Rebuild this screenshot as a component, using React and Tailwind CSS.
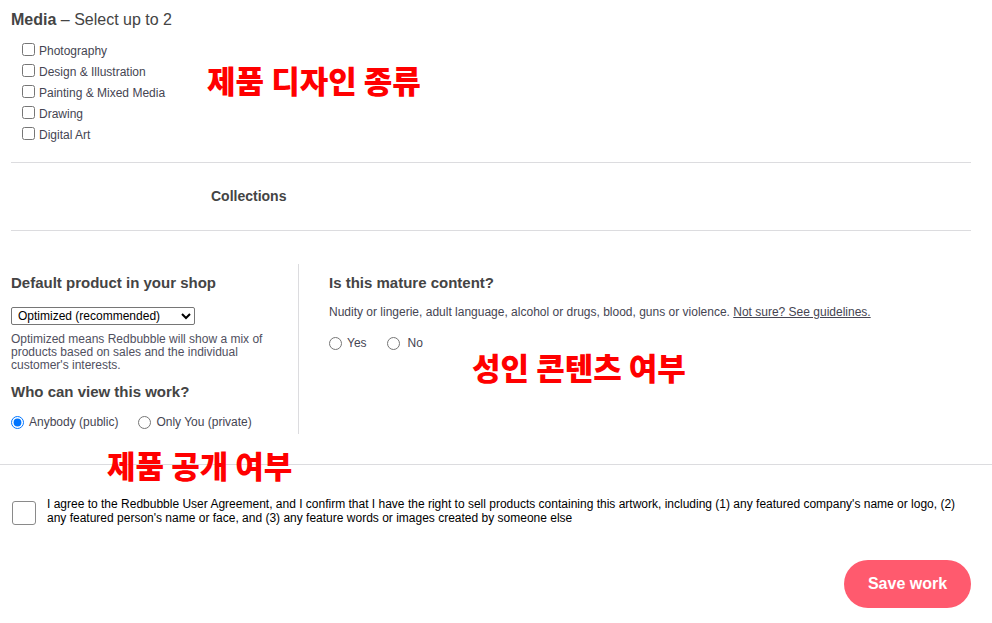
import React from "react";

const ko = { fontFamily: '"Noto Sans CJK KR", sans-serif' };

function Check({ label }) {
  return (
    <label className="flex items-center h-[21px]">
      <input type="checkbox" className="m-0 w-[13px] h-[13px] mt-[-3px] mr-[4px]" />
      <span>{label}</span>
    </label>
  );
}

export default function App() {
  return (
    <div className="relative w-[992px] h-[623px] bg-white text-[#3e3e48] overflow-hidden" style={{ fontFamily: '"Liberation Sans", Arial, sans-serif' }}>
      <div className="px-[11px] pt-[11px]">
        <div className="text-[16px] leading-[18px] text-[#444]">
          <span className="font-bold">Media</span> – Select up to 2
        </div>
        <div className="pl-[11px] pt-[11px] text-[12px] text-[#454552] flex flex-col">
          <Check label="Photography" />
          <Check label="Design & Illustration" />
          <Check label="Painting & Mixed Media" />
          <Check label="Drawing" />
          <Check label="Digital Art" />
        </div>
        <div className="w-[960px] border-t border-[#dcdcdf] mt-[17px]" />
        <div className="h-[67px] flex items-center pl-[200px] text-[14px] font-bold text-[#444]">Collections</div>
        <div className="w-[960px] border-t border-[#dcdcdf]" />
      </div>

      <div className="flex pl-[11px] pt-[33px]">
        <div className="w-[288px] border-r border-[#dcdcdf] h-[170px]">
          <div className="text-[15px] font-bold text-[#444] leading-[18px] mt-[10px]">Default product in your shop</div>
          <select className="mt-[15px] w-[184px] h-[18px] text-[12px] text-black border border-[#767676] rounded-[2px] px-[2px] leading-[14px] bg-white" defaultValue="opt">
            <option value="opt">Optimized (recommended)</option>
          </select>
          <div className="mt-[6px] text-[12px] leading-[13px] text-[#505060] w-[260px]">
            Optimized means Redbubble will show a mix of products based on sales and the individual customer's interests.
          </div>
          <div className="mt-[11px] text-[15px] font-bold text-[#444] leading-[18px]">Who can view this work?</div>
          <div className="mt-[12px] flex items-center text-[12px] text-[#454552]">
            <label className="flex items-center">
              <input type="radio" name="vis" defaultChecked className="m-0 w-[13px] h-[13px] mr-[5px]" />
              Anybody (public)
            </label>
            <label className="flex items-center ml-[20px]">
              <input type="radio" name="vis" className="m-0 w-[13px] h-[13px] mr-[5px]" />
              Only You (private)
            </label>
          </div>
        </div>
        <div className="pl-[30px]">
          <div className="text-[15px] font-bold text-[#444] leading-[18px] mt-[10px]">Is this mature content?</div>
          <div className="mt-[13px] text-[12px] text-[#454552] leading-[14px]">
            Nudity or lingerie, adult language, alcohol or drugs, blood, guns or violence. <span className="underline">Not sure? See guidelines.</span>
          </div>
          <div className="mt-[15px] flex items-center text-[12px] text-[#454552]">
            <label className="flex items-center">
              <input type="radio" name="mat" className="m-0 w-[13px] h-[13px] mr-[5px]" />
              Yes
            </label>
            <label className="flex items-center ml-[20px]">
              <input type="radio" name="mat" className="m-0 w-[13px] h-[13px] mr-[8px]" />
              No
            </label>
          </div>
        </div>
      </div>

      <div className="border-t border-[#dcdcdf] mt-[30px]" />

      <div className="flex items-start pl-[12px] pt-[32px] pr-[30px]">
        <div className="w-[24px] h-[24px] shrink-0 border border-[#8a8a8a] rounded-[3px] mt-[4px]" />
        <div className="ml-[11px] text-[12px] leading-[14px] text-black">
          I agree to the Redbubble User Agreement, and I confirm that I have the right to sell products containing this artwork, including (1) any featured company's name or logo, (2) any featured person's name or face, and (3) any feature words or images created by someone else
        </div>
      </div>

      <div className="flex justify-end pr-[21px] pt-[35px]">
        <button className="w-[127px] h-[48px] rounded-full bg-[#ff5a6e] text-white font-bold text-[16px]">Save work</button>
      </div>

      <div className="absolute left-[207px] top-[58px] text-[31px] font-black text-[#ff0000] leading-[44px]" style={ko}>제품 디자인 종류</div>
      <div className="absolute left-[472px] top-[345px] text-[31px] font-black text-[#ff0000] leading-[44px]" style={ko}>성인 콘텐츠 여부</div>
      <div className="absolute left-[107px] top-[443px] text-[31px] font-black text-[#ff0000] leading-[44px]" style={ko}>제품 공개 여부</div>
    </div>
  );
}
